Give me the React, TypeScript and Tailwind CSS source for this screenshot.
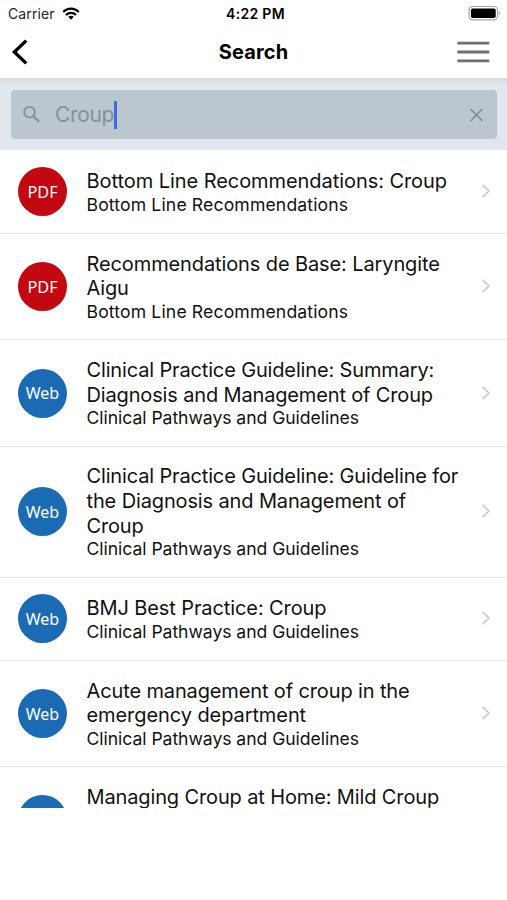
type Line = { text: string; tracking: string };
type Item = { kind: "PDF" | "Web"; lines: Line[]; source: string };

const BOTTOM_LINE = "Bottom Line Recommendations";
const PATHWAYS = "Clinical Pathways and Guidelines";

const items: Item[] = [
  { kind: "PDF", lines: [{ text: "Bottom Line Recommendations: Croup", tracking: "tracking-[-0.06px]" }], source: BOTTOM_LINE },
  {
    kind: "PDF",
    lines: [
      { text: "Recommendations de Base: Laryngite", tracking: "tracking-[-0.11px]" },
      { text: "Aigu", tracking: "tracking-[-0.15px]" },
    ],
    source: BOTTOM_LINE,
  },
  {
    kind: "Web",
    lines: [
      { text: "Clinical Practice Guideline: Summary:", tracking: "tracking-[-0.15px]" },
      { text: "Diagnosis and Management of Croup", tracking: "tracking-[-0.15px]" },
    ],
    source: PATHWAYS,
  },
  {
    kind: "Web",
    lines: [
      { text: "Clinical Practice Guideline: Guideline for", tracking: "tracking-[-0.15px]" },
      { text: "the Diagnosis and Management of", tracking: "tracking-[-0.13px]" },
      { text: "Croup", tracking: "tracking-[-0.15px]" },
    ],
    source: PATHWAYS,
  },
  { kind: "Web", lines: [{ text: "BMJ Best Practice: Croup", tracking: "tracking-[-0.1px]" }], source: PATHWAYS },
  {
    kind: "Web",
    lines: [
      { text: "Acute management of croup in the", tracking: "tracking-[-0.13px]" },
      { text: "emergency department", tracking: "tracking-[-0.08px]" },
    ],
    source: PATHWAYS,
  },
];

function StatusBar() {
  return (
    <div className="grid h-[27px] grid-cols-3 items-center pl-[8px] pr-[6px] text-[14px]">
      <div className="flex items-center gap-[7px] text-[#222]">
        <span className="tracking-[0.1px]">Carrier</span>
        <svg width="18" height="13" viewBox="0 0 18 13" fill="none" stroke="#000" strokeWidth="2.1">
          <path d="M1.2 5C5.6 .5 12.4 .5 16.8 5" />
          <path d="M4 8C6.9 5.1 11.1 5.1 14 8" />
          <path d="M6.2 9.8C7.8 8.3 10.2 8.3 11.8 9.8L9 12.7Z" fill="#000" stroke="none" />
        </svg>
      </div>
      <span className="whitespace-nowrap pl-[2px] text-center font-semibold tracking-[0.3px] text-black">4:22 PM</span>
      <svg className="justify-self-end" width="33" height="16" viewBox="0 0.6 33 16">
        <rect x="1" y="1.1" width="28.6" height="13.4" rx="3.8" fill="#fff" stroke="#a5a5a5" strokeWidth="1.2" />
        <rect x="2.9" y="3" width="24.8" height="9.6" rx="1.8" fill="#000" />
        <path d="M31 5.8Q33 7.8 31 9.8Z" fill="#999" />
      </svg>
    </div>
  );
}

function NavBar() {
  return (
    <div className="flex h-[51px] items-center justify-between pb-[1px] pl-[11px] pr-[17px]">
      <svg width="34" height="28" viewBox="0 0 34 28" fill="none" stroke="#000" strokeWidth="3.4">
        <path d="M15.2 2.6L3.4 14L15.2 25.4" />
      </svg>
      <h1 className="pl-[6px] text-[20px] font-bold tracking-[0.15px] text-black">Search</h1>
      <svg width="34" height="24" viewBox="0 0 34 24" fill="none" stroke="#707070" strokeWidth="2.8">
        <path d="M1.3 3.2H33.3M1.3 12H33.3M1.3 20.8H33.3" />
      </svg>
    </div>
  );
}

function SearchField() {
  return (
    <div className="h-[72px] bg-linear-to-b from-[#d6d8da] to-[#e1e7ef] to-[6px] pl-[11px] pr-[10px] pt-[12px]">
      <div className="flex h-[49px] items-center rounded-[4px] bg-[#bcc6cf] pl-[11px] pr-[13px]">
        <svg width="20" height="20" viewBox="0 0 20 20" fill="none" stroke="#84919c" strokeWidth="1.9">
          <circle cx="7.5" cy="7.2" r="5.3" />
          <path d="M11.3 11L17 16.8" strokeWidth="2.3" />
        </svg>
        <span className="ml-[13px] text-[21px] tracking-[-0.35px] text-[#84919c]">Croup</span>
        <span className="h-[28px] w-[2.5px] bg-[#426aec]" />
        <svg className="ml-auto" width="15" height="16" viewBox="0 0 15 16" fill="none" stroke="#7e8a95" strokeWidth="1.6">
          <path d="M1.5 2L13.3 14M13.3 2L1.5 14" />
        </svg>
      </div>
    </div>
  );
}

function Row({ item }: { item: Item }) {
  return (
    <li className="flex min-h-[83.4px] shrink-0 items-center border-b border-[#e6e6e6] pl-[18px] pr-[15.5px]">
      <span
        className={`flex size-[49px] shrink-0 items-center justify-center rounded-full font-['Noto_Sans',sans-serif] text-white ${
          item.kind === "PDF" ? "bg-[#c40812] text-[16.3px]" : "bg-[#1b6bb4] text-[16px]"
        }`}
      >
        {item.kind}
      </span>
      <div className="ml-[19.5px] flex-1 whitespace-nowrap pb-[17px] pt-[17.7px] text-[#111]">
        {item.lines.map((line) => (
          <p key={line.text} className={`text-[20px] leading-[24.6px] ${line.tracking}`}>{line.text}</p>
        ))}
        <p className={`text-[17.6px] leading-[21.4px] ${item.source === BOTTOM_LINE ? "tracking-[0.14px]" : "tracking-[-0.05px]"}`}>
          {item.source}
        </p>
      </div>
      <svg className="mb-[1px]" width="12" height="16" viewBox="0 0 12 16" fill="none" stroke="#cfcfd1" strokeWidth="1.8">
        <path d="M2.7 2L9 8L2.7 14" />
      </svg>
    </li>
  );
}

// The last row is cut by the end of the list: only its first line and the top of its badge show.
function PartialRow() {
  return (
    <li className="flex h-[41px] shrink-0 items-start overflow-hidden pl-[18px]">
      <span className="mt-[28.2px] size-[49px] shrink-0 rounded-full bg-[#1b6bb4]" />
      <p className="ml-[19.5px] mt-[17.9px] whitespace-nowrap text-[20px] leading-[24.6px] tracking-[-0.13px] text-[#111]">
        Managing Croup at Home: Mild Croup
      </p>
    </li>
  );
}

export default function App() {
  return (
    <main className="h-[900px] w-[507px] overflow-hidden bg-white font-['Inter',sans-serif]">
      <StatusBar />
      <NavBar />
      <SearchField />
      <ul className="flex flex-col pt-[0.7px]">
        {items.map((item) => (
          <Row key={item.lines[0].text} item={item} />
        ))}
        <PartialRow />
      </ul>
    </main>
  );
}
